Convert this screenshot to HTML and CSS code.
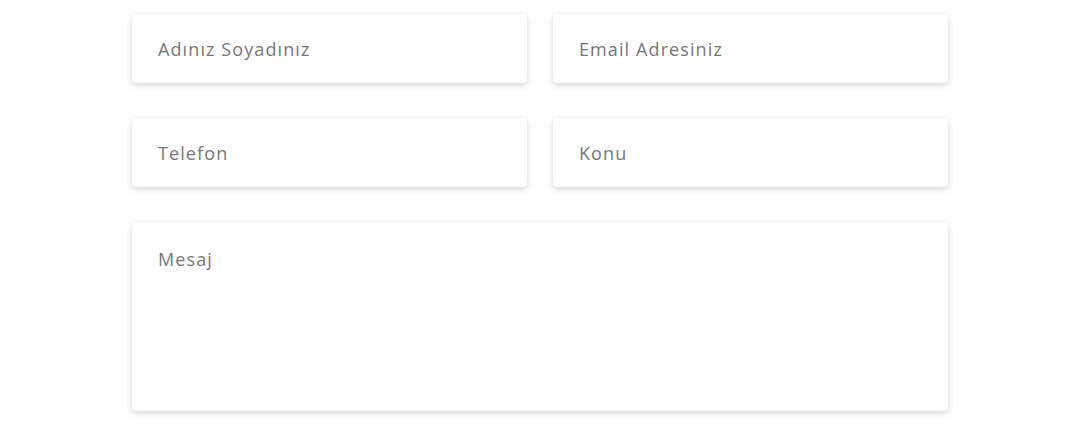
FILE: index.html
```html
<!DOCTYPE html>
<html lang="tr">
<head>
<meta charset="utf-8">
<title>İletişim</title>
<link rel="stylesheet" href="styles.css">
</head>
<body>
<form class="contact-form">
  <div class="grid">
    <input class="field" type="text" placeholder="Adınız Soyadınız">
    <input class="field" type="email" placeholder="Email Adresiniz">
    <input class="field" type="text" placeholder="Telefon">
    <input class="field" type="text" placeholder="Konu">
    <textarea class="field message" placeholder="Mesaj"></textarea>
  </div>
</form>
</body>
</html>
```
FILE: styles.css
```css
html, body {
  margin: 0;
  padding: 0;
  background: #fff;
}
.contact-form {
  width: 816px;
  margin: 14px auto 0;
  padding-bottom: 14px;
}
.grid {
  display: grid;
  grid-template-columns: 1fr 1fr;
  column-gap: 26px;
  row-gap: 35px;
}
.field {
  display: block;
  box-sizing: border-box;
  width: 100%;
  height: 69px;
  margin: 0;
  border: none;
  border-radius: 4px;
  background: #fff;
  box-shadow: 0 2px 6px rgba(0, 0, 0, 0.18);
  padding: 0 26px;
  font-family: "Open Sans", "DejaVu Sans", sans-serif;
  font-size: 18px;
  letter-spacing: 1.1px;
  color: #555;
  outline: none;
}
.field::placeholder {
  color: #777;
  opacity: 1;
}
.message {
  grid-column: 1 / span 2;
  height: 189px;
  padding: 25px 26px;
  resize: none;
  line-height: 24px;
}
```
